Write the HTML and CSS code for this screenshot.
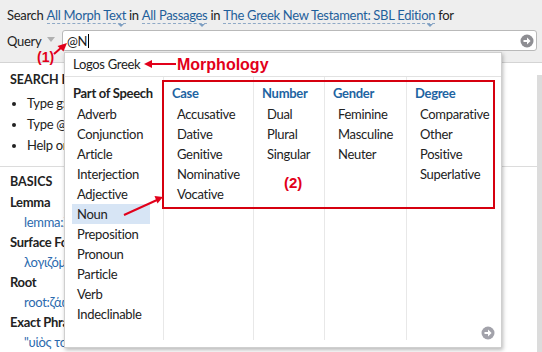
FILE: index.html
```html
<!DOCTYPE html>
<html>
<head>
<meta charset="utf-8">
<link rel="stylesheet" href="styles.css">
</head>
<body>
<div class="top">
  <div class="searchline">Search <span class="lnk">All Morph Text</span> in <span class="lnk">All Passages</span> in <span class="lnk">The Greek New Testament: SBL Edition</span> for</div>
  <div class="queryrow">
    <span class="qlabel">Query</span>
    <span class="qtri"></span>
    <div class="qinput">
      <span class="qtext">@N</span><span class="caret"></span>
      <svg class="goicon" width="14" height="14" viewBox="0 0 14 14"><circle cx="7" cy="7" r="6.5" fill="#8e8e93"/><path d="M3.5 6h3.5V3.6L10.6 7 7 10.4V8H3.5z" fill="#fff"/></svg>
    </div>
  </div>
</div>
<div class="panel">
  <div class="panelbody">
    <div class="sec">SEARCH HELP</div>
    <ul class="bullets">
      <li>Type g: for Greek</li>
      <li>Type @ for morph</li>
      <li>Help on search</li>
    </ul>
    <div class="sep"></div>
    <div class="sec basics">BASICS</div>
    <div class="bh">Lemma</div>
    <div class="ex">lemma:λόγος</div>
    <div class="bh">Surface Form</div>
    <div class="ex">λογιζόμενος</div>
    <div class="bh">Root</div>
    <div class="ex">root:ζάω</div>
    <div class="bh">Exact Phrase</div>
    <div class="ex">"υἱὸς τοῦ"</div>
  </div>
  <div class="scroll"></div>
</div>

<div class="popup">
  <div class="phead">Logos Greek</div>
  <div class="cols">
    <div class="col c1">
      <div class="ch dark">Part of Speech</div>
      <div class="it">Adverb</div>
      <div class="it">Conjunction</div>
      <div class="it">Article</div>
      <div class="it">Interjection</div>
      <div class="it">Adjective</div>
      <div class="it sel">Noun</div>
      <div class="it">Preposition</div>
      <div class="it">Pronoun</div>
      <div class="it">Particle</div>
      <div class="it">Verb</div>
      <div class="it">Indeclinable</div>
    </div>
    <div class="col c2">
      <div class="ch">Case</div>
      <div class="it">Accusative</div>
      <div class="it">Dative</div>
      <div class="it">Genitive</div>
      <div class="it">Nominative</div>
      <div class="it">Vocative</div>
    </div>
    <div class="col c3">
      <div class="ch">Number</div>
      <div class="it">Dual</div>
      <div class="it">Plural</div>
      <div class="it">Singular</div>
    </div>
    <div class="col c4">
      <div class="ch">Gender</div>
      <div class="it">Feminine</div>
      <div class="it">Masculine</div>
      <div class="it">Neuter</div>
    </div>
    <div class="col c5">
      <div class="ch">Degree</div>
      <div class="it">Comparative</div>
      <div class="it">Other</div>
      <div class="it">Positive</div>
      <div class="it">Superlative</div>
    </div>
  </div>
  <svg class="picon" width="14" height="14" viewBox="0 0 14 14"><circle cx="7" cy="7" r="6.5" fill="#a2a2aa"/><path d="M3.5 6h3.5V3.6L10.6 7 7 10.4V8H3.5z" fill="#fff"/></svg>
</div>

<div class="redbox"></div>
<div class="anno a1">(1)</div>
<div class="anno a2">(2)</div>
<div class="anno morph">Morphology</div>
<svg class="arrows" width="542" height="352" viewBox="0 0 542 352">
  <g stroke="#e2001a" stroke-width="2" fill="none">
    <line x1="54" y1="54" x2="62" y2="47"/>
    <line x1="176" y1="64" x2="150" y2="64"/>
    <line x1="124" y1="215" x2="157" y2="200"/>
  </g>
  <g fill="#e2001a">
    <polygon points="67,43 57.5,46 63.5,51.5"/>
    <polygon points="144,64 152,60 152,68"/>
    <polygon points="163,197 154.5,196 157.5,203.5"/>
  </g>
</svg>
</body>
</html>
```
FILE: styles.css
```css
* { box-sizing: border-box; }
html, body { margin: 0; padding: 0; }
body {
  width: 542px;
  height: 352px;
  overflow: hidden;
  background: #eeeeee;
  font-family: "Lato", "DejaVu Sans", sans-serif;
  font-size: 13px;
  letter-spacing: -0.3px;
  color: #222;
  position: relative;
}
.top { height: 62px; padding: 6px 0 0 7px; }
.searchline { line-height: 18px; height: 18px; white-space: nowrap; }
.lnk {
  color: #1f5f9b;
  position: relative;
  display: inline-block;
  line-height: 15px;
  border-bottom: 1px dashed #8fa9c6;
}
.lnk::after {
  content: "";
  position: absolute;
  right: 2px;
  bottom: -4px;
  border-left: 3px solid transparent;
  border-right: 3px solid transparent;
  border-top: 3px solid #7d9ec2;
}
.queryrow { display: flex; align-items: center; margin-top: 6px; height: 21px; }
.qlabel { width: 40px; }
.qtri {
  width: 0; height: 0;
  margin: 0 7px 2px 0;
  border-left: 4px solid transparent;
  border-right: 4px solid transparent;
  border-top: 5px solid #b0b0b0;
}
.qinput {
  width: 475px;
  height: 21px;
  background: #fff;
  border: 1px solid #b9b9b9;
  border-radius: 3px;
  display: flex;
  align-items: center;
  padding-left: 4px;
}
.qtext { line-height: 18px; }
.caret { width: 1px; height: 14px; background: #000; margin-left: 1px; }
.goicon { margin-left: auto; margin-right: 2px; }
.panel {
  display: flex;
  height: 290px;
  border-top: 1px solid #d4d4d4;
  background: #fff;
}
.panelbody { flex: 1; padding: 7px 0 0 10px; overflow: hidden; white-space: nowrap; }
.scroll { width: 5px; background: #dcdcdc; margin-top: 12px; }
.sec { font-weight: bold; line-height: 20px; font-size: 12.5px; letter-spacing: 0; }
.bullets { margin: 3px 0 0 0; padding: 0 0 0 17px; }
.bullets li { line-height: 21px; }
.sep { height: 1px; background: #dcdcdc; margin: 10px 0 5px -10px; }
.bh { font-weight: bold; line-height: 20px; }
.ex { color: #2b6aae; line-height: 20px; padding-left: 14px; }
.popup {
  position: absolute;
  left: 64px;
  top: 52px;
  width: 438px;
  height: 296px;
  background: #fff;
  border: 1px solid #cfcfcf;
  box-shadow: 1px 2px 4px rgba(0,0,0,0.28);
}
.phead {
  height: 24px;
  line-height: 22px;
  padding-left: 8px;
  border-bottom: 1px solid #e2e2e2;
}
.cols { display: flex; height: 263px; }
.col { padding: 6px 0 0 8px; border-left: 1px solid #e8e8e8; white-space: nowrap; }
.c1 { width: 98px; border-left: none; padding-left: 7px; }
.c2 { width: 90px; }
.c3 { width: 71px; }
.c4 { width: 82px; }
.c5 { flex: 1; }
.ch { font-weight: bold; color: #1e64a2; line-height: 20px; margin-bottom: 1px; }
.ch.dark { color: #222; padding-left: 1px; }
.it { line-height: 20px; padding-left: 5px; }
.c1 .it { margin-right: 13px; }
.it.sel { background: #d7e5f5; }
.picon { position: absolute; right: 6px; bottom: 7px; }
.redbox {
  position: absolute;
  left: 162px;
  top: 80px;
  width: 333px;
  height: 129px;
  border: 2px solid #d6000f;
}
.anno {
  position: absolute;
  color: #e2001a;
  font-family: "Liberation Sans", Arial, sans-serif;
  font-weight: bold;
  letter-spacing: 0;
}
.a1 { left: 37px; top: 49px; font-size: 14px; line-height: 16px; }
.a2 { left: 284px; top: 174px; font-size: 15px; line-height: 18px; }
.morph { left: 177px; top: 55px; font-size: 16px; line-height: 19px; }
.arrows { position: absolute; left: 0; top: 0; pointer-events: none; }
```
